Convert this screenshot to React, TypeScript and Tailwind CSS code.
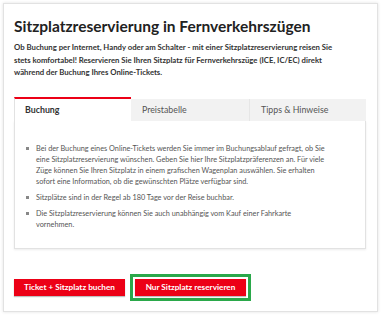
import React from "react";

const tabs = ["Buchung", "Preistabelle", "Tipps & Hinweise"];

const bullets = [
  [
    "Bei der Buchung eines Online-Tickets werden Sie immer im Buchungsablauf gefragt, ob Sie",
    "eine Sitzplatzreservierung wünschen. Geben Sie hier Ihre Sitzplatzpräferenzen an. Für viele",
    "Züge können Sie Ihren Sitzplatz in einem grafischen Wagenplan auswählen. Sie erhalten",
    "sofort eine Information, ob die gewünschten Plätze verfügbar sind.",
  ],
  ["Sitzplätze sind in der Regel ab 180 Tage vor der Reise buchbar."],
  ["Die Sitzplatzreservierung können Sie auch unabhängig vom Kauf einer Fahrkarte", "vornehmen."],
];

const intro = [
  "Ob Buchung per Internet, Handy oder am Schalter - mit einer Sitzplatzreservierung reisen Sie",
  "stets komfortabel! Reservieren Sie Ihren Sitzplatz für Fernverkehrszüge (ICE, IC/EC) direkt",
  "während der Buchung Ihres Online-Tickets.",
];

const App = () => {
  return (
    <div className="w-[382px] h-[318px] bg-white overflow-hidden pt-[3px] pl-[3px] font-['Lato',sans-serif] text-[#333]">
      <div className="w-[375px] h-[309px] border border-[#e2e2e2] shadow-[0_0_3px_rgba(0,0,0,0.12)] px-[10px]">
        {/* Heading */}
        <h1 className="mt-[12px] text-[15.5px] leading-[20px] font-bold text-[#222] whitespace-nowrap">
          Sitzplatzreservierung in Fernverkehrszügen
        </h1>
        <div className="mt-[5px] text-[7.75px] leading-[12.5px] font-bold text-[#333] whitespace-nowrap">
          {intro.map((l) => (
            <div key={l}>{l}</div>
          ))}
        </div>

        {/* Tabs */}
        <div className="mt-[18px] w-[352px]">
          <div className="flex">
            {tabs.map((t, i) => (
              <div
                key={t}
                className={
                  i === 0
                    ? "w-[117px] h-[24px] border-t-2 border-[#ec0016] border-l border-l-[#e2e2e2] bg-white pl-[10px] text-[8.8px] font-bold text-[#333] flex items-center"
                    : i === 1
                    ? "w-[119px] h-[22px] mt-[2px] bg-[#f2f2f2] border-r border-[#e6e6e6] pl-[11px] text-[8.8px] text-[#555] flex items-center"
                    : "w-[116px] h-[22px] mt-[2px] bg-[#f2f2f2] pl-[11px] text-[8.8px] text-[#555] flex items-center"
                }
              >
                {t}
              </div>
            ))}
          </div>
          <div className="h-[128px] border border-t-0 border-[#e2e2e2] shadow-[0_1px_2px_rgba(0,0,0,0.08)] pt-[22px] pl-[11px]">
            <ul className="flex flex-col gap-[5px]">
              {bullets.map((b) => (
                <li key={b[0]} className="flex text-[7.3px] leading-[11px] text-[#555] whitespace-nowrap">
                  <span className="w-[10px] shrink-0 flex pt-[4px]">
                    <span className="w-[3px] h-[3px] bg-[#888]" />
                  </span>
                  <span>
                    {b.map((l) => (
                      <div key={l}>{l}</div>
                    ))}
                  </span>
                </li>
              ))}
            </ul>
          </div>
        </div>

        {/* Buttons */}
        <div className="mt-[25px] flex items-center gap-[5px]">
          <button className="w-[111px] h-[17px] bg-[#ec0016] text-white text-[8.2px] font-bold shadow-[0_1px_1px_rgba(0,0,0,0.25)]">
            Ticket + Sitzplatz buchen
          </button>
          <div className="border-[3px] border-[#2aa84a] p-[2px]">
            <button className="block w-[111px] h-[17px] bg-[#ec0016] text-white text-[8.2px] font-bold shadow-[0_1px_1px_rgba(0,0,0,0.25)]">
              Nur Sitzplatz reservieren
            </button>
          </div>
        </div>
      </div>
    </div>
  );
};

export default App;
